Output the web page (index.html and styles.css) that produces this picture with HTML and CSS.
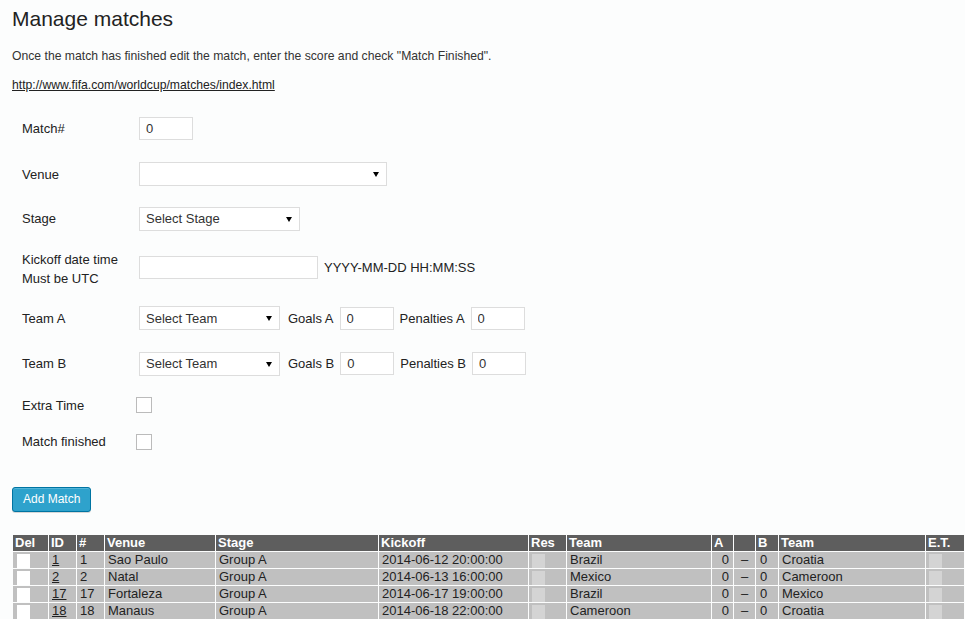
FILE: index.html
```html
<!DOCTYPE html>
<html lang="en">
<head>
    <meta charset="UTF-8">
    <title>Manage matches</title>
    <link rel="stylesheet" href="styles.css">
</head>
<body>

    <h2 class="page-title">Manage matches</h2>
    <p class="intro">Once the match has finished edit the match, enter the score and check "Match Finished".</p>
    <p class="source"><a href="#">http://www.fifa.com/worldcup/matches/index.html</a></p>

    <form class="match-form">
        <div class="form-grid">
            <label>Match#</label>
            <div class="field"><input type="text" class="input input-short" value="0"></div>

            <label>Venue</label>
            <div class="field"><span class="select select-venue"><select><option></option></select></span></div>

            <label>Stage</label>
            <div class="field"><span class="select select-stage"><select><option>Select Stage</option></select></span></div>

            <label class="label-two-line">Kickoff date time<br>Must be UTC</label>
            <div class="field">
                <input type="text" class="input input-date" value="">
                <span>YYYY-MM-DD HH:MM:SS</span>
            </div>

            <label>Team A</label>
            <div class="field">
                <span class="select select-team"><select><option>Select Team</option></select></span>
                <span>Goals A</span>
                <input type="text" class="input input-short" value="0">
                <span>Penalties A</span>
                <input type="text" class="input input-short" value="0">
            </div>

            <label>Team B</label>
            <div class="field">
                <span class="select select-team"><select><option>Select Team</option></select></span>
                <span>Goals B</span>
                <input type="text" class="input input-short" value="0">
                <span>Penalties B</span>
                <input type="text" class="input input-short" value="0">
            </div>

            <label>Extra Time</label>
            <div class="field"><input type="checkbox" class="checkbox"></div>

            <label>Match finished</label>
            <div class="field"><input type="checkbox" class="checkbox"></div>
        </div>

        <button type="button" class="button-primary">Add Match</button>
    </form>

    <table class="matches">
        <thead>
            <tr>
                <th class="col-del">Del</th>
                <th class="col-id">ID</th>
                <th class="col-num">#</th>
                <th class="col-venue">Venue</th>
                <th class="col-stage">Stage</th>
                <th class="col-kickoff">Kickoff</th>
                <th class="col-res">Res</th>
                <th class="col-team-a">Team</th>
                <th class="col-a">A</th>
                <th class="col-dash"></th>
                <th class="col-b">B</th>
                <th class="col-team-b">Team</th>
                <th class="col-et">E.T.</th>
            </tr>
        </thead>
        <tbody>
            <tr>
                <td><span class="box box-white"></span></td>
                <td><a href="#">1</a></td>
                <td>1</td>
                <td>Sao Paulo</td>
                <td>Group A</td>
                <td>2014-06-12 20:00:00</td>
                <td><span class="box box-grey"></span></td>
                <td>Brazil</td>
                <td class="score-a">0</td>
                <td class="dash">&ndash;</td>
                <td class="score-b">0</td>
                <td>Croatia</td>
                <td><span class="box box-grey"></span></td>
            </tr>
            <tr>
                <td><span class="box box-white"></span></td>
                <td><a href="#">2</a></td>
                <td>2</td>
                <td>Natal</td>
                <td>Group A</td>
                <td>2014-06-13 16:00:00</td>
                <td><span class="box box-grey"></span></td>
                <td>Mexico</td>
                <td class="score-a">0</td>
                <td class="dash">&ndash;</td>
                <td class="score-b">0</td>
                <td>Cameroon</td>
                <td><span class="box box-grey"></span></td>
            </tr>
            <tr>
                <td><span class="box box-white"></span></td>
                <td><a href="#">17</a></td>
                <td>17</td>
                <td>Fortaleza</td>
                <td>Group A</td>
                <td>2014-06-17 19:00:00</td>
                <td><span class="box box-grey"></span></td>
                <td>Brazil</td>
                <td class="score-a">0</td>
                <td class="dash">&ndash;</td>
                <td class="score-b">0</td>
                <td>Mexico</td>
                <td><span class="box box-grey"></span></td>
            </tr>
            <tr>
                <td><span class="box box-white"></span></td>
                <td><a href="#">18</a></td>
                <td>18</td>
                <td>Manaus</td>
                <td>Group A</td>
                <td>2014-06-18 22:00:00</td>
                <td><span class="box box-grey"></span></td>
                <td>Cameroon</td>
                <td class="score-a">0</td>
                <td class="dash">&ndash;</td>
                <td class="score-b">0</td>
                <td>Croatia</td>
                <td><span class="box box-grey"></span></td>
            </tr>
        </tbody>
    </table>

</body>
</html>
```

FILE: styles.css
```css
/* Basic Reset */
* {
    margin: 0;
    padding: 0;
    box-sizing: border-box;
}

body {
    font-family: "Liberation Sans", Arial, sans-serif;
    font-size: 13px;
    color: #333;
    background-color: #fcfdfd;
    padding: 0 12px;
    overflow: hidden;
}

/* Header */
.page-title {
    font-size: 21px;
    font-weight: normal;
    line-height: 29px;
    color: #222;
    margin-top: 4px;
}

.intro {
    font-size: 12.2px;
    line-height: 18px;
    margin-top: 14px;
}

.source {
    font-size: 12.2px;
    line-height: 18px;
    margin-top: 11px;
}

.source a {
    color: #222;
}

/* Form */
.match-form {
    margin-top: 12px;
}

.form-grid {
    display: grid;
    grid-template-columns: 117px auto;
    grid-template-rows: 44px 48px 41px 56px 46px 45px 38px 35px;
    align-items: center;
    padding-left: 10px;
    color: #222;
}

.form-grid label {
    line-height: 19px;
}

.form-grid .label-two-line {
    padding-top: 3px;
}

.field {
    display: flex;
    align-items: center;
    gap: 6px;
}

.input {
    font-family: inherit;
    font-size: 13px;
    color: #333;
    height: 23px;
    padding: 0 6px;
    border: 1px solid #ddd;
    background-color: #fff;
}

.input-short {
    width: 54px;
}

.input-date {
    width: 179px;
}

.select {
    position: relative;
    display: inline-block;
}

.select select {
    appearance: none;
    -webkit-appearance: none;
    width: 100%;
    height: 24px;
    font-family: inherit;
    font-size: 13px;
    color: #333;
    padding: 0 6px;
    border: 1px solid #ddd;
    border-radius: 0;
    background-color: #fff;
}

.select::after {
    content: "";
    position: absolute;
    right: 8px;
    top: 10px;
    border-left: 3.5px solid transparent;
    border-right: 3.5px solid transparent;
    border-top: 5px solid #000;
}

.select-venue {
    width: 248px;
}

.select-stage {
    width: 161px;
}

.select-team {
    width: 141px;
    margin-right: 2px;
}

.checkbox {
    appearance: none;
    -webkit-appearance: none;
    width: 16px;
    height: 16px;
    margin-left: -3px;
    border: 1px solid #bbb;
    background-color: #fff;
}

/* Button */
.button-primary {
    display: block;
    margin-top: 28px;
    height: 25px;
    padding: 0 10px 1px;
    font-family: inherit;
    font-size: 12px;
    color: #fff;
    background-color: #2ea2cc;
    border: 1px solid #0074a2;
    border-radius: 3px;
    box-shadow: inset 0 1px 0 rgba(120, 200, 230, 0.5), 0 1px 0 rgba(0, 0, 0, 0.15);
    cursor: pointer;
}

/* Matches table */
.matches {
    margin-top: 22px;
    width: 953px;
    table-layout: fixed;
    border-spacing: 1px;
    font-size: 13px;
    color: #222;
}

.matches th,
.matches td {
    height: 16px;
    line-height: 16px;
    padding: 0 2px 0 3px;
    text-align: left;
    white-space: nowrap;
    overflow: hidden;
}

.matches th {
    background-color: #5e5e5e;
    color: #fff;
    font-weight: bold;
    padding-left: 2px;
}

.matches td {
    background-color: #c0c0c0;
    overflow: visible;
}

.matches a {
    color: #222;
}

.col-del { width: 35px; }
.col-id { width: 27px; }
.col-num { width: 27px; }
.col-venue { width: 110px; }
.col-stage { width: 162px; }
.col-kickoff { width: 149px; }
.col-res { width: 37px; }
.col-team-a { width: 144px; }
.col-a { width: 21px; }
.col-dash { width: 21px; }
.col-b { width: 22px; }
.col-team-b { width: 146px; }
.col-et { width: 38px; }

.matches td.score-a {
    text-align: right;
    padding-right: 4px;
}

.matches td.dash {
    text-align: center;
    padding: 0;
}

.matches td.score-b {
    padding-left: 4px;
}

.box {
    display: inline-block;
    vertical-align: top;
    width: 13px;
    height: 14px;
    margin-top: 2px;
}

.box-white {
    background-color: #fff;
    margin-left: 1px;
}

.box-grey {
    background-color: #d4d4d4;
}
```
